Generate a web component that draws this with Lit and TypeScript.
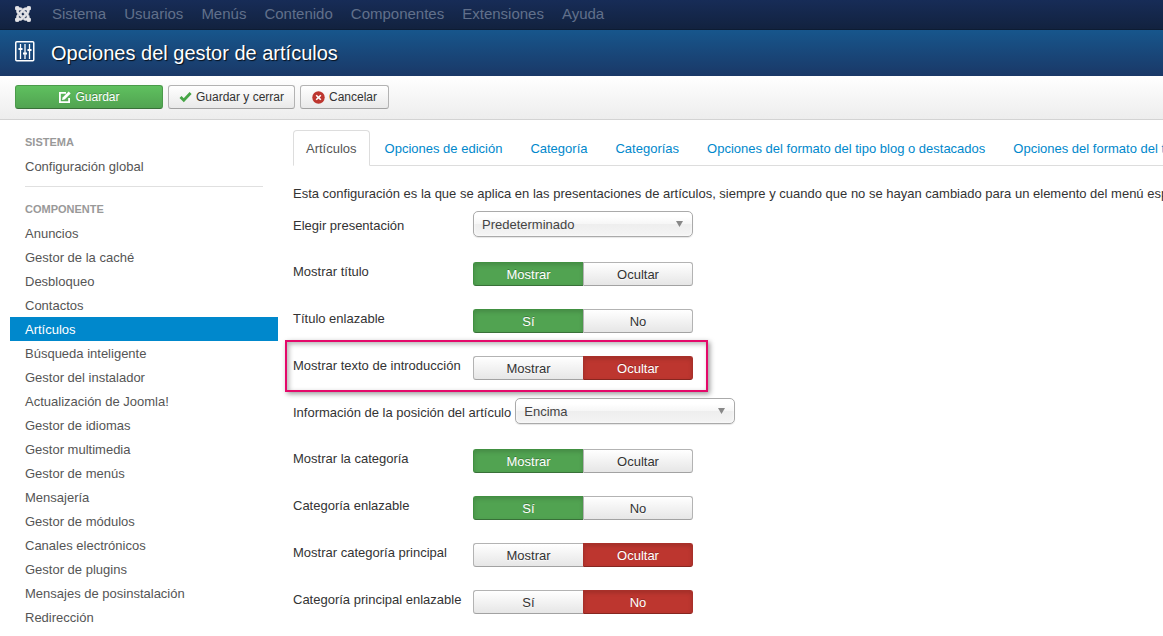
import { LitElement, html, css } from "lit";
import { customElement, property } from "lit/decorators.js";
import { classMap } from "lit/directives/class-map.js";

type Row =
  | { kind: "select"; id: string; label: string; value: string }
  | { kind: "toggle"; id: string; label: string; on: string; off: string; active: boolean; marked?: boolean };

const MENU = ["Sistema", "Usuarios", "Menús", "Contenido", "Componentes", "Extensiones", "Ayuda"];

const COMPONENTS = [
  "Anuncios",
  "Gestor de la caché",
  "Desbloqueo",
  "Contactos",
  "Artículos",
  "Búsqueda inteligente",
  "Gestor del instalador",
  "Actualización de Joomla!",
  "Gestor de idiomas",
  "Gestor multimedia",
  "Gestor de menús",
  "Mensajería",
  "Gestor de módulos",
  "Canales electrónicos",
  "Gestor de plugins",
  "Mensajes de posinstalación",
  "Redirección",
];

const TABS = [
  "Artículos",
  "Opciones de edición",
  "Categoría",
  "Categorías",
  "Opciones del formato del tipo blog o destacados",
  "Opciones del formato del tipo lista",
];

const ROWS: Row[] = [
  { kind: "select", id: "layout", label: "Elegir presentación", value: "Predeterminado" },
  { kind: "toggle", id: "title", label: "Mostrar título", on: "Mostrar", off: "Ocultar", active: true },
  { kind: "toggle", id: "link-title", label: "Título enlazable", on: "Sí", off: "No", active: true },
  { kind: "toggle", id: "intro", label: "Mostrar texto de introducción", on: "Mostrar", off: "Ocultar", active: false, marked: true },
  { kind: "select", id: "position", label: "Información de la posición del artículo", value: "Encima" },
  { kind: "toggle", id: "category", label: "Mostrar la categoría", on: "Mostrar", off: "Ocultar", active: true },
  { kind: "toggle", id: "link-category", label: "Categoría enlazable", on: "Sí", off: "No", active: true },
  { kind: "toggle", id: "parent", label: "Mostrar categoría principal", on: "Mostrar", off: "Ocultar", active: false },
  { kind: "toggle", id: "link-parent", label: "Categoría principal enlazable", on: "Sí", off: "No", active: false },
];

@customElement("option-row")
export class OptionRow extends LitElement {
  @property({ attribute: false }) row!: Row;

  static styles = css`
    :host {
      display: block;
    }
    .row {
      position: relative;
      display: flex;
      width: fit-content;
      min-height: 28px;
    }
    .row.toggle {
      min-height: 29px;
    }
    .row.marked::after {
      content: "";
      position: absolute;
      inset: -11px -15px -12px -8px;
      box-sizing: border-box;
      border: 2px solid #e4096a;
      box-shadow: 2px 2px 5px rgba(0, 0, 0, 0.4), inset 2px 2px 5px rgba(0, 0, 0, 0.3);
      pointer-events: none;
    }
    .label {
      box-sizing: border-box;
      min-width: 180px;
      padding: 6px 4px 0 0;
      white-space: nowrap;
    }
    .pick {
      position: relative;
      height: 26px;
    }
    .select {
      appearance: none;
      box-sizing: border-box;
      width: 220px;
      height: 26px;
      margin: 0;
      padding: 2px 24px 0 8px;
      border: 1px solid #aaa;
      border-radius: 5px;
      background: linear-gradient(#fff 20%, #f6f6f6 50%, #eee 52%, #f4f4f4 100%);
      box-shadow: 0 0 3px #fff inset, 0 1px 1px rgba(0, 0, 0, 0.1);
      color: #444;
      font: inherit;
    }
    .arrow {
      position: absolute;
      right: 10px;
      top: 10px;
      pointer-events: none;
    }
    .group {
      display: grid;
      grid-template-columns: 110px 110px;
      height: 24px;
      margin-top: 5px;
    }
    .choice {
      position: relative;
      box-sizing: border-box;
      padding-top: 3px;
      text-align: center;
      border: 1px solid #b3b3b3;
      border-bottom-color: #a2a2a2;
      background: linear-gradient(#fff, #e6e6e6);
      color: #333;
      text-shadow: 0 1px 1px rgba(255, 255, 255, 0.75);
    }
    .choice:first-child {
      border-radius: 3px 0 0 3px;
      border-right: 0;
    }
    .choice:last-child {
      border-radius: 0 3px 3px 0;
    }
    .choice.yes,
    .choice.no {
      color: #fff;
      text-shadow: 0 -1px 0 rgba(0, 0, 0, 0.25);
      box-shadow: inset 0 2px 4px rgba(0, 0, 0, 0.15);
    }
    .choice.yes {
      background: #51a351;
      border-color: #419041 #419041 #387038;
    }
    .choice.no {
      background: #bd362f;
      border-color: #a8302a #a8302a #862620;
    }
    .radio {
      position: absolute;
      inset: 0;
      width: 100%;
      height: 100%;
      margin: 0;
      opacity: 0;
    }
  `;

  render() {
    const r = this.row;
    if (r.kind === "select") {
      return html`<div class="row">
        <label class="label" for=${r.id}>${r.label}</label>
        <div class="pick">
          <select class="select" id=${r.id}>
            <option>${r.value}</option>
          </select>
          <svg class="arrow" width="7" height="6" viewBox="0 0 7 6"><path d="M0 0h7L3.500 6z" fill="#888" /></svg>
        </div>
      </div>`;
    }
    return html`<div
      class=${classMap({ row: true, toggle: true, marked: !!r.marked })}
      role="radiogroup"
      aria-labelledby=${r.id}
    >
      <span class="label" id=${r.id}>${r.label}</span>
      <div class="group">
        <label class=${classMap({ choice: true, yes: r.active })}>
          <input class="radio" type="radio" name=${r.id} .checked=${r.active} @change=${() => this.pick(true)} />${r.on}
        </label>
        <label class=${classMap({ choice: true, no: !r.active })}>
          <input class="radio" type="radio" name=${r.id} .checked=${!r.active} @change=${() => this.pick(false)} />${r.off}
        </label>
      </div>
    </div>`;
  }

  private pick(active: boolean) {
    if (this.row.kind === "toggle") this.row = { ...this.row, active };
  }
}

@customElement("app-root")
export class AppRoot extends LitElement {
  static styles = css`
    :host {
      display: block;
      overflow: hidden;
      background: #fff;
      color: #333;
      font: 13px/18px "Liberation Sans", Arial, sans-serif;
    }
    a {
      text-decoration: none;
    }
    .navbar {
      box-sizing: border-box;
      display: flex;
      align-items: center;
      height: 30px;
      padding: 0 15px;
      gap: 21px;
      border-bottom: 1px solid #0d1c33;
      background: linear-gradient(#172c57, #12223f);
      font-size: 15px;
    }
    .brand {
      display: flex;
      padding-bottom: 1px;
    }
    .menu {
      display: flex;
      gap: 18px;
      padding-bottom: 1px;
    }
    .menu-link {
      color: #61708b;
    }
    .header {
      display: flex;
      align-items: center;
      gap: 16px;
      height: 46px;
      padding: 0 15px;
      background: linear-gradient(#17568c, #1a3867);
      color: #fff;
    }
    .title {
      margin: 0;
      font-size: 20px;
      font-weight: normal;
      line-height: 24px;
      text-shadow: 1px 1px 1px rgba(0, 0, 0, 0.8);
    }
    .header-icon {
      margin-bottom: 3px;
    }
    .toolbar {
      box-sizing: border-box;
      display: flex;
      gap: 5px;
      height: 44px;
      padding: 9px 15px;
      border-bottom: 1px solid #d3d3d3;
      background: linear-gradient(#fff, #ededed);
    }
    .btn {
      box-sizing: border-box;
      display: flex;
      align-items: center;
      justify-content: center;
      gap: 4px;
      height: 24px;
      min-width: 89px;
      padding: 0 10px;
      border: 1px solid #b3b3b3;
      border-bottom-color: #a2a2a2;
      border-radius: 3px;
      background: linear-gradient(#fff, #e9e9e9);
      color: #333;
      font: 12px/18px "Liberation Sans", Arial, sans-serif;
    }
    .btn.primary {
      width: 148px;
      border-color: #4a9a4a #4a9a4a #387038;
      background: linear-gradient(#5fc05f, #51a351);
      color: #fff;
      text-shadow: 0 -1px 0 rgba(0, 0, 0, 0.25);
    }
    .body {
      display: grid;
      grid-template-columns: 268px minmax(0, 1fr);
      gap: 15px;
      padding: 10px 0 0 10px;
    }
    .side-head {
      margin: 0;
      padding: 3px 15px;
      color: #999;
      font-size: 11px;
      line-height: 18px;
      font-weight: bold;
      text-transform: uppercase;
    }
    .side-list {
      list-style: none;
      margin: 0;
      padding: 0;
    }
    .side-link {
      display: block;
      padding: 4px 15px 2px;
      color: #555;
    }
    .side-link.active {
      background: #08c;
      color: #fff;
    }
    .divider {
      height: 1px;
      margin: 8px 15px 10px;
      border: 0;
      background: #e0e0e0;
    }
    .tabs {
      display: flex;
      gap: 2px;
      border-bottom: 1px solid #ddd;
      white-space: nowrap;
    }
    .tab {
      margin-bottom: -1px;
      padding: 9px 12px 7px;
      border: 1px solid transparent;
      border-radius: 4px 4px 0 0;
      color: #08c;
    }
    .tab.active {
      border-color: #ddd #ddd #fff;
      background: #fff;
      color: #555;
    }
    .intro {
      margin: 19px 0 8px;
      white-space: nowrap;
    }
    .rows {
      display: grid;
      gap: 18px;
    }
  `;

  render() {
    return html`
      <nav class="navbar">
        <a class="brand" href="#" aria-label="Joomla">
          <svg width="16" height="16" viewBox="0 32 448 448" fill="#e4e4e8" stroke="#e4e4e8" stroke-width="18">
            <path
              d="M.6 92.1C.6 58.8 27.4 32 60.4 32c30 0 54.5 21.9 59.2 50.2 32.6-7.6 67.1.6 96.5 30l-44.3 44.3c-20.5-20.5-42.6-16.3-55.4-3.5-14.3 14.3-14.3 37.9 0 52.2l99.5 99.5-44 44.3c-87.7-87.2-49.7-49.7-99.8-99.7-26.8-26.5-35-64.8-24.8-98.9C20.4 144.6.6 120.7.6 92.1zm129.5 116.4l44.3 44.3c10-10 89.7-89.7 99.7-99.8 14.3-14.3 37.6-14.3 51.9 0 12.8 12.8 17 35-3.5 55.4l44 44.3c31.2-31.2 38.5-67.6 28.9-101.2 29.2-4.1 51.9-29.2 51.9-59.5 0-33.2-26.8-60.1-59.8-60.1-30.3 0-55.4 22.5-59.5 51.6-33.8-9.9-71.7-1.5-98.3 25.1-18.3 19.1-71.1 71.5-99.6 99.9zm266.3 152.2c8.2-32.7-.9-68.5-26.3-93.9-11.8-12.2 5 4.7-99.5-99.7l-44.3 44.3 99.7 99.7c14.3 14.3 14.3 37.6 0 51.9-12.8 12.8-35 17-55.4-3.5l-44 44.3c27.6 30.2 68 38.8 102.7 28 5.5 27.4 29.7 48.1 58.9 48.1 33 0 59.8-26.8 59.8-60.1 0-30.2-22.5-55-51.6-59.1zm-84.3-53.1l-44-44.3c-87 86.4-50.4 50.4-99.7 99.8-14.3 14.3-37.6 14.3-51.9 0-13.1-13.4-16.9-35.3 3.2-55.4l-44-44.3c-30.2 30.2-38 65.2-29.5 98.3-26.7 6-46.2 29.9-46.2 58.2C0 453.2 26.8 480 59.8 480c28.6 0 52.5-19.8 58.6-46.7 32.7 8.2 68.5-.6 94.2-26 32.1-32 12.2-12.4 99.5-99.7z"
            />
          </svg>
        </a>
        <div class="menu">${MENU.map((m) => html`<a class="menu-link" href="#">${m}</a>`)}</div>
      </nav>

      <header class="header">
        <svg class="header-icon" width="20" height="21" viewBox="0 0 20 21" fill="none" stroke="#fff">
          <rect x="0.75" y="0.75" width="18" height="19" rx="1" stroke-width="1.5" />
          <path d="M5.500 3v15M10 3v15M14.500 3v15" stroke-width="1.300" />
          <path d="M3.500 8h4M8 12.500h4M12.500 9h4" stroke-width="2" />
        </svg>
        <h1 class="title">Opciones del gestor de artículos</h1>
      </header>

      <div class="toolbar">
        <button class="btn primary" type="button">
          <svg width="13" height="13" viewBox="0 0 13 13">
            <path d="M8 1.900H1.900v9.200h9.200V7" fill="none" stroke="#fff" stroke-width="1.800" />
            <path d="M4 9l.6-2.600L10.700.4l2 2L6.600 8.400z" fill="#fff" />
          </svg>
          Guardar
        </button>
        <button class="btn" type="button">
          <svg width="13" height="12" viewBox="0 0 13 12">
            <path d="M1.500 6l3.300 3.300L11.600 2" fill="none" stroke="#46a546" stroke-width="2.800" />
          </svg>
          Guardar y cerrar
        </button>
        <button class="btn" type="button">
          <svg width="13" height="13" viewBox="0 0 13 13">
            <circle cx="6.500" cy="6.500" r="6.200" fill="#bd362f" />
            <path d="M4.200 4.200l4.600 4.600M8.800 4.200L4.200 8.800" stroke="#fff" stroke-width="1.600" />
          </svg>
          Cancelar
        </button>
      </div>

      <div class="body">
        <aside>
          <h2 class="side-head">Sistema</h2>
          <ul class="side-list">
            <li><a class="side-link" href="#">Configuración global</a></li>
          </ul>
          <hr class="divider" />
          <h2 class="side-head">Componente</h2>
          <ul class="side-list">
            ${COMPONENTS.map(
              (c) => html`<li>
                <a class=${classMap({ "side-link": true, active: c === "Artículos" })} href="#">${c}</a>
              </li>`
            )}
          </ul>
        </aside>
        <main>
          <nav class="tabs">
            ${TABS.map((t, i) => html`<a class=${classMap({ tab: true, active: i === 0 })} href="#">${t}</a>`)}
          </nav>
          <p class="intro">
            Esta configuración es la que se aplica en las presentaciones de artículos, siempre y cuando que no se hayan
            cambiado para un elemento del menú específico.
          </p>
          <div class="rows">${ROWS.map((r) => html`<option-row .row=${r}></option-row>`)}</div>
        </main>
      </div>
    `;
  }
}
